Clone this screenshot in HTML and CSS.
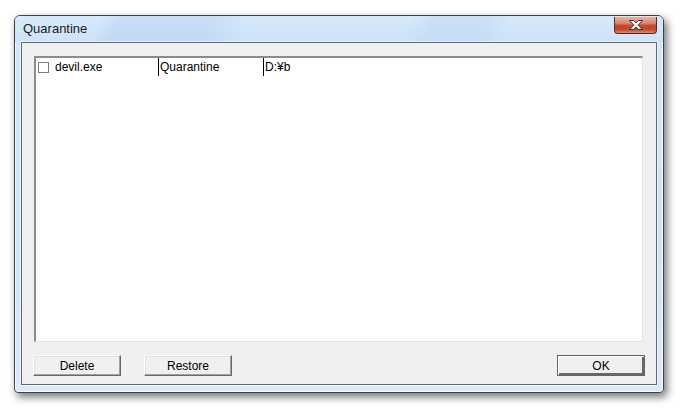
FILE: index.html
```html
<!DOCTYPE html>
<html>
<head>
<meta charset="utf-8">
<link rel="stylesheet" href="styles.css">
</head>
<body>
<div class="window">
  <div class="titlebar">
    <span class="title">Quarantine</span>
    <div class="close">
      <svg width="18" height="12" viewBox="0 0 18 12">
        <defs>
          <linearGradient id="xg" x1="0" y1="0" x2="0" y2="1">
            <stop offset="0" stop-color="#ffffff"/>
            <stop offset="1" stop-color="#d8d8d8"/>
          </linearGradient>
        </defs>
        <path d="M2.5 1.5 L6.5 1.5 L9 3.8 L11.5 1.5 L15.5 1.5 L11.3 6 L15.5 10.5 L11.5 10.5 L9 8.2 L6.5 10.5 L2.5 10.5 L6.7 6 Z" fill="url(#xg)" stroke="#3e3434" stroke-width="1" stroke-linejoin="round"/>
      </svg>
    </div>
  </div>
  <div class="client">
    <div class="listbox">
      <div class="row">
        <div class="cell c1"><span class="check"></span><span>devil.exe</span></div>
        <div class="cell c2">Quarantine</div>
        <div class="cell c3">D:¥b</div>
      </div>
    </div>
    <div class="buttons">
      <button class="btn">Delete</button>
      <button class="btn">Restore</button>
      <span class="spacer"></span>
      <button class="btn ok">OK</button>
    </div>
  </div>
</div>
</body>
</html>
```

FILE: styles.css
```css
html, body {
  margin: 0;
  padding: 0;
  background: #ffffff;
  width: 683px;
  height: 412px;
  overflow: hidden;
}
.window {
  margin: 15px 0 0 14px;
  width: 650px;
  height: 378px;
  box-sizing: border-box;
  border: 1px solid #3c4048;
  border-radius: 6px 6px 4px 4px;
  background: linear-gradient(180deg, #d4e7fa 0%, #cfe4f8 60%, #dbeafa 100%);
  box-shadow: 3px 4px 9px rgba(0, 0, 0, 0.55), inset 0 0 0 1px rgba(255, 255, 255, 0.85);
  padding: 0 6px 7px 6px;
  display: flex;
  flex-direction: column;
}
.titlebar {
  height: 26px;
  display: flex;
  align-items: flex-start;
  margin: 0 -6px;
  padding: 0 6px 0 7px;
  border-radius: 5px 5px 0 0;
  background:
    linear-gradient(112deg, rgba(255,255,255,0) 0%, rgba(255,255,255,0) 13%, rgba(170,200,235,0.35) 16%, rgba(170,200,235,0.35) 30%, rgba(255,255,255,0) 36%, rgba(255,255,255,0) 60%, rgba(170,200,235,0.25) 64%, rgba(170,200,235,0.25) 72%, rgba(255,255,255,0) 76%),
    linear-gradient(180deg, #d7eafc, #cde3f8);
}
.title {
  font-family: "Liberation Sans", Arial, sans-serif;
  font-size: 13px;
  color: #1a1a1a;
  line-height: 26px;
  padding-left: 1px;
  flex: 1;
}
.close {
  width: 43px;
  height: 17px;
  margin-top: 1px;
  box-sizing: border-box;
  border: 1px solid #5a2a22;
  border-top: none;
  border-radius: 0 0 4px 4px;
  background: linear-gradient(180deg, #eab0a2 0%, #d8846f 40%, #c2442c 55%, #c74a30 80%, #dc8d72 100%);
  display: flex;
  align-items: center;
  justify-content: center;
}
.close svg { display: block; }
.client {
  flex: 1;
  background: #f0f0f0;
  border: 1px solid #62666e;
  box-shadow: 0 0 0 1px rgba(255,255,255,0.6);
  padding: 13px 13px 8px 11px;
  display: flex;
  flex-direction: column;
}
.listbox {
  height: 286px;
  box-sizing: border-box;
  background: #ffffff;
  border-style: solid;
  border-width: 2px 1px 1px 2px;
  border-color: #8c8c8c #e3e3e3 #e3e3e3 #8c8c8c;
  margin-left: 1px;
}
.row {
  display: flex;
  height: 18px;
  font-family: "Liberation Sans", Arial, sans-serif;
  font-size: 12px;
  color: #000;
}
.cell {
  height: 18px;
  line-height: 18px;
  display: flex;
  align-items: center;
  box-sizing: border-box;
}
.c1 { width: 122px; padding-left: 2px; }
.c2 { width: 105px; border-left: 1px solid #000; padding-left: 1px; }
.c3 { flex: 1; border-left: 1px solid #000; padding-left: 1px; }
.check {
  width: 11px;
  height: 11px;
  box-sizing: border-box;
  border: 1px solid #7a7a7a;
  background: #fff;
  margin-right: 6px;
}
.buttons {
  display: flex;
  margin-top: 13px;
  gap: 23px;
}
.spacer { flex: 1; }
.btn {
  width: 88px;
  height: 21px;
  margin: 0;
  padding: 0;
  box-sizing: border-box;
  background: #f0f0f0;
  font-family: "Liberation Sans", Arial, sans-serif;
  font-size: 12px;
  color: #000;
  border-style: solid;
  border-width: 1px;
  border-color: #ffffff #696969 #696969 #ffffff;
  box-shadow: inset -1px -1px 0 #a0a0a0, inset 1px 1px 0 #e3e3e3;
}
.ok {
  border-color: #646464;
  border-width: 1px;
  box-shadow: inset 1px 1px 0 #ffffff, inset -2px -2px 0 #696969;
  margin-right: -2px;
}
```
